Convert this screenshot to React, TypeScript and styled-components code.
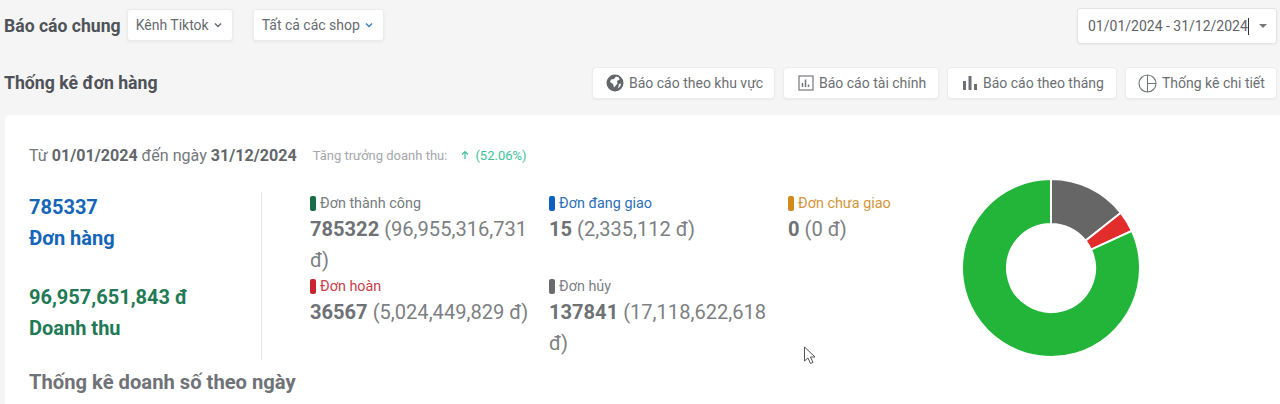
import React from 'react';
import styled, { createGlobalStyle } from 'styled-components';

const GlobalStyle = createGlobalStyle`
  html, body {
    margin: 0;
    padding: 0;
    height: 404px;
    overflow: hidden;
    background: #f5f5f5;
    font-family: Roboto, "Liberation Sans", sans-serif;
    color: #5c6066;
  }
`;

const Page = styled.div`
  position: relative;
  width: 1280px;
  height: 404px;
  overflow: hidden;
  padding: 8px 3px 0 4px;
  box-sizing: border-box;
`;

const TopBar = styled.div`
  display: flex;
  align-items: center;
  height: 36px;
`;

const PageTitle = styled.h1`
  margin: 0 6px 0 0;
  font-size: 17.6px;
  font-weight: 700;
  color: #4f5358;
  white-space: nowrap;
`;

const SelectBox = styled.div<{ $gap?: number }>`
  display: flex;
  align-items: center;
  height: 32px;
  margin-top: -2px;
  margin-right: ${(p) => p.$gap ?? 0}px;
  padding: 0 10px 0 8px;
  gap: 5px;
  background: #fff;
  border: 1px solid #ececec;
  border-radius: 3px;
  box-sizing: border-box;
  box-shadow: 0 1px 3px rgba(0, 0, 0, 0.06);
  font-size: 14px;
  color: #666a70;
  white-space: nowrap;
`;

const DateBox = styled.div`
  display: flex;
  align-items: center;
  justify-content: space-between;
  width: 200px;
  height: 36px;
  margin-left: auto;
  padding: 0 9px 0 10px;
  background: #fff;
  border: 1px solid #e4e4e4;
  border-radius: 3px;
  box-sizing: border-box;
  box-shadow: 0 1px 3px rgba(0, 0, 0, 0.05);
  font-size: 14px;
  color: #5f6368;
`;

const Caret = styled.span`
  width: 1px;
  height: 17px;
  background: #333;
`;

const DateValue = styled.span`
  display: flex;
  align-items: center;
`;

const TriangleDown = styled.span`
  width: 0;
  height: 0;
  border-left: 4px solid transparent;
  border-right: 4px solid transparent;
  border-top: 4px solid #777;
`;

const SectionBar = styled.div`
  display: flex;
  align-items: center;
  justify-content: space-between;
  height: 32px;
  margin-top: 23px;
`;

const SectionTitle = styled.h2`
  margin: 0;
  font-size: 17.7px;
  font-weight: 700;
  color: #4f5358;
`;

const ReportLinks = styled.div`
  display: flex;
  gap: 8px;
`;

const ReportButton = styled.button<{ $width: number; $inset: number }>`
  display: flex;
  align-items: center;
  gap: 5px;
  width: ${(p) => p.$width}px;
  height: 32px;
  padding: 0 0 0 ${(p) => p.$inset}px;
  background: #fff;
  border: 1px solid #ececec;
  border-radius: 4px;
  box-sizing: border-box;
  box-shadow: 0 1px 2px rgba(0, 0, 0, 0.05);
  font-family: inherit;
  font-size: 14px;
  color: #6b6f74;
  white-space: nowrap;
`;

const Card = styled.section`
  margin: 16px -3px 0 1px;
  padding: 30px 24px 0;
  height: 290px;
  box-sizing: border-box;
  background: #fff;
  border-radius: 4px 0 0 0;
`;

const RangeLine = styled.div`
  display: flex;
  align-items: center;
  height: 20px;
  font-size: 16.1px;
  color: #74787d;
  white-space: nowrap;

  b {
    font-weight: 700;
    color: #63676c;
  }
`;

const GrowthLabel = styled.span`
  margin-left: 16px;
  font-size: 13px;
  color: #a4a8ac;
`;

const GrowthValue = styled.span`
  display: flex;
  align-items: center;
  gap: 5px;
  margin-left: 13px;
  font-size: 13px;
  color: #3cc19a;
`;

const Summary = styled.div`
  display: flex;
  margin-top: 27px;
`;

const Totals = styled.div`
  width: 233px;
  height: 168px;
  border-right: 1px solid #e6e6e6;
  box-sizing: border-box;
`;

const TotalBlock = styled.div<{ $color: string }>`
  margin-bottom: 29px;
  color: ${(p) => p.$color};
  font-size: 20px;
  font-weight: 700;
  line-height: 30.5px;
`;

const StatGrid = styled.div`
  display: grid;
  grid-template-columns: repeat(3, 239px);
  align-content: start;
  margin-left: 48px;
  margin-top: 1px;
`;

const Stat = styled.div`
  padding-right: 8px;
  box-sizing: border-box;
`;

const StatLabel = styled.div<{ $color: string }>`
  display: flex;
  align-items: center;
  gap: 4px;
  height: 21px;
  font-size: 14.4px;
  color: ${(p) => p.$color};
`;

const StatMark = styled.span<{ $color: string }>`
  width: 6px;
  height: 15px;
  border-radius: 2px;
  background: ${(p) => p.$color};
`;

const StatValue = styled.div`
  font-size: 20.1px;
  line-height: 31px;
  color: #7c7f83;

  b {
    font-weight: 700;
    color: #6e7175;
  }
`;

const Donut = styled.svg`
  flex: none;
  width: 180px;
  height: 180px;
  margin: -14px 0 0 -66px;
`;

const DailyTitle = styled.h3`
  margin: 7px 0 0;
  font-size: 20.2px;
  font-weight: 700;
  line-height: 30px;
  color: #6f7276;
`;

const Pointer = styled.svg`
  position: absolute;
  left: 803px;
  top: 346px;
`;

const Chevron: React.FC<{ color: string }> = ({ color }) => (
  <svg width="8" height="6" viewBox="0 0 8 6" fill="none">
    <path d="M1 1.5l3 3 3-3" stroke={color} strokeWidth="1.4" />
  </svg>
);

// globe with dark land
const GlobeIcon = () => (
  <svg width="18" height="18" viewBox="0 0 18 18">
    <circle cx="9" cy="9" r="8.5" fill="#63676c" />
    <path d="M10 2.500l3 1 .5 2-2.500 1.500.5 2.500-3.500 4-1-3.500-3-2 1-2.500 3-.5z" fill="#fff" />
    <path d="M13 10l2-.5-.5 2.500-2.500 2.500z" fill="#fff" />
  </svg>
);

const LedgerIcon = () => (
  <svg width="16" height="16" viewBox="0 0 16 16" fill="none">
    <rect x="1" y="1" width="14" height="14" stroke="#73777c" strokeWidth="1.200" />
    <path d="M4.500 12V8M7.500 12V4.500M10.500 12v-2.500" stroke="#73777c" strokeWidth="1.500" />
  </svg>
);

const BarsIcon = () => (
  <svg width="16" height="16" viewBox="0 0 16 16" fill="#6d7176">
    <rect x="1" y="6" width="3" height="9" />
    <rect x="6.500" y="1" width="3" height="14" />
    <rect x="12" y="9" width="3" height="6" />
  </svg>
);

const PieIcon = () => (
  <svg width="19" height="19" viewBox="0 0 19 19" fill="none" stroke="#73777c" strokeWidth="1.100">
    <circle cx="9.500" cy="9.500" r="8.500" />
    <path d="M9.500 1v17M9.500 9.500H18" />
  </svg>
);

const stats = [
  { label: 'Đơn thành công', color: '#777b80', mark: '#1a6e4a', count: '785322', money: '(96,955,316,731 đ)' },
  { label: 'Đơn đang giao', color: '#2d6fb8', mark: '#0d5fc0', count: '15', money: '(2,335,112 đ)' },
  { label: 'Đơn chưa giao', color: '#d2953a', mark: '#d08a1e', count: '0', money: '(0 đ)' },
  { label: 'Đơn hoàn', color: '#c9404a', mark: '#c9262f', count: '36567', money: '(5,024,449,829 đ)' },
  { label: 'Đơn hủy', color: '#7d8085', mark: '#6b6b6b', count: '137841', money: '(17,118,622,618 đ)' },
];

// donut segments in degrees clockwise from 12 o'clock
const segments = [
  { from: 0, to: 51.7, color: '#666666' },
  { from: 51.7, to: 65.4, color: '#e32c2c' },
  { from: 65.4, to: 360, color: '#22b53a' },
];

const arcPath = (from: number, to: number) => {
  const pt = (r: number, deg: number) => {
    const a = (deg * Math.PI) / 180;
    return `${(90 + r * Math.sin(a)).toFixed(2)} ${(90 - r * Math.cos(a)).toFixed(2)}`;
  };
  const large = to - from > 180 ? 1 : 0;
  return `M${pt(89, from)}A89 89 0 ${large} 1 ${pt(89, to)}L${pt(44, to)}A44 44 0 ${large} 0 ${pt(44, from)}Z`;
};

export default function App() {
  return (
    <Page>
      <GlobalStyle />
      <TopBar>
        <PageTitle>Báo cáo chung</PageTitle>
        <SelectBox $gap={20}>
          Kênh Tiktok <Chevron color="#666a70" />
        </SelectBox>
        <SelectBox>
          Tất cả các shop <Chevron color="#3c7fc0" />
        </SelectBox>
        <DateBox>
          <DateValue>
            01/01/2024 - 31/12/2024
            <Caret />
          </DateValue>
          <TriangleDown />
        </DateBox>
      </TopBar>

      <SectionBar>
        <SectionTitle>Thống kê đơn hàng</SectionTitle>
        <ReportLinks>
          <ReportButton $width={183} $inset={13}><GlobeIcon />Báo cáo theo khu vực</ReportButton>
          <ReportButton $width={156} $inset={14}><LedgerIcon />Báo cáo tài chính</ReportButton>
          <ReportButton $width={170} $inset={14}><BarsIcon />Báo cáo theo tháng</ReportButton>
          <ReportButton $width={152} $inset={12}><PieIcon />Thống kê chi tiết</ReportButton>
        </ReportLinks>
      </SectionBar>

      <Card>
        <RangeLine>
          <span>
            Từ <b>01/01/2024</b> đến ngày <b>31/12/2024</b>
          </span>
          <GrowthLabel>Tăng trưởng doanh thu:</GrowthLabel>
          <GrowthValue>
            <svg width="10" height="10" viewBox="0 0 10 10" fill="none" stroke="#3cc19a" strokeWidth="1.200">
              <path d="M5 9V1.500M2 4.500l3-3 3 3" />
            </svg>
            (52.06%)
          </GrowthValue>
        </RangeLine>

        <Summary>
          <Totals>
            <TotalBlock $color="#1565b8">
              785337
              <br />
              Đơn hàng
            </TotalBlock>
            <TotalBlock $color="#1f7a55">
              96,957,651,843 đ
              <br />
              Doanh thu
            </TotalBlock>
          </Totals>
          <StatGrid>
            {stats.map((s) => (
              <Stat key={s.label}>
                <StatLabel $color={s.color}>
                  <StatMark $color={s.mark} />
                  {s.label}
                </StatLabel>
                <StatValue>
                  <b>{s.count}</b> {s.money}
                </StatValue>
              </Stat>
            ))}
          </StatGrid>
          <Donut viewBox="0 0 180 180">
            {segments.map((s) => (
              <path key={s.color} d={arcPath(s.from, s.to)} fill={s.color} stroke="#fff" strokeWidth="2" />
            ))}
          </Donut>
        </Summary>

        <DailyTitle>Thống kê doanh số theo ngày</DailyTitle>
      </Card>

      <Pointer width="14" height="20" viewBox="0 0 14 20" fill="#fff" stroke="#555" strokeWidth="1">
        <path d="M1.500 1v14l3.500-3 2.500 5.500 2.500-1-2.500-5.500h4.500z" />
      </Pointer>
    </Page>
  );
}
